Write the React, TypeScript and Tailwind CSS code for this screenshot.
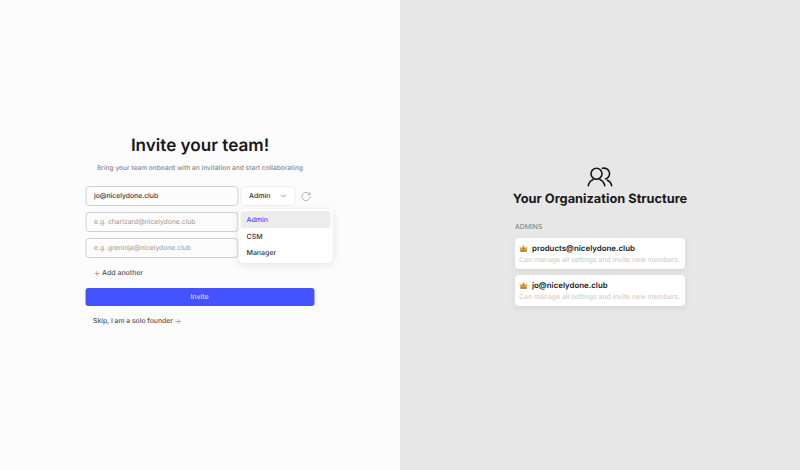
import { ChevronDown, Plus, RotateCw, ArrowRight } from "lucide-react";

const admins = ["products@nicelydone.club", "jo@nicelydone.club"];

function Crown() {
    return (
        <svg width="9" height="8" viewBox="0 0 10 9" className="shrink-0">
            <path d="M0.5 2.5 L2.6 4.4 L5 1 L7.4 4.4 L9.5 2.5 L8.7 7 H1.3 Z" fill="#dba83a" />
            <rect x="1.3" y="7" width="7.4" height="1.6" rx="0.4" fill="#8a6a2a" />
            <circle cx="5" cy="5" r="0.8" fill="#b5472f" />
        </svg>
    );
}

function TeamIcon() {
    return (
        <svg width="26" height="20" viewBox="0 0 26 20" fill="none" stroke="#18181b" strokeWidth="1.6" strokeLinecap="round">
            <circle cx="9.5" cy="6.7" r="5.5" />
            <path d="M1.3 18.6c.6-3.2 2.4-5 4.6-5.9" />
            <path d="M13.1 12.7c2.2.9 4 2.7 4.6 5.9" />
            <path d="M15.5 1.3a5.5 5.5 0 0 1 3 10.6" />
            <path d="M20.4 13.2c2.1.9 3.7 2.6 4.3 5.4" />
        </svg>
    );
}

export default function App() {
    return (
        <div className="flex h-[470px] w-[800px] overflow-hidden font-['Inter',sans-serif] [text-rendering:geometricPrecision]">
            <div className="flex w-[400px] flex-col items-center bg-[#fcfcfc] pt-[133px]">
                <h1 className="text-[17.1px] leading-[26px] font-semibold text-[#18181b]">Invite your team!</h1>
                <p className="mt-[3px] text-[6.6px] leading-[12px] font-medium text-[#8a8a8a]">
                    Bring your team onboard with an invitation and start collaborating
                </p>

                <div className="mt-[12px] w-[229px] -translate-x-[0.5px]">
                    <div className="flex h-[20px] items-center gap-[2px]">
                        <div className="flex h-[20px] w-[153px] items-center rounded-[4px] border-[1.5px] border-[#d0d0d0] px-[8px] text-[6.8px] font-medium text-[#333]">
                            jo@nicelydone.club
                        </div>
                        <div className="flex h-[20px] w-[55px] items-center justify-between rounded-[4px] border border-[#eeeeee] bg-white pr-[7px] pl-[8px] text-[7px] font-medium text-[#333]">
                            Admin
                            <ChevronDown size={8} color="#666" />
                        </div>
                        <RotateCw size={11} color="#9a9a9a" strokeWidth={1.5} className="ml-[3px]" />
                    </div>

                    <div className="relative mt-[6px] flex flex-col gap-[6px]">
                        <div className="flex h-[20px] w-[153px] items-center rounded-[4px] border-[1.5px] border-[#d0d0d0] px-[8px] text-[6.8px] text-[#9a9a9a]">
                            e.g. charizard@nicelydone.club
                        </div>
                        <div className="flex h-[20px] w-[153px] items-center rounded-[4px] border-[1.5px] border-[#d0d0d0] px-[8px] text-[6.8px] text-[#9a9a9a]">
                            e.g. greninja@nicelydone.club
                        </div>
                        <div className="absolute top-[-3px] left-[153.5px] flex w-[94px] flex-col rounded-[5px] bg-white p-[2px] text-[7px] font-medium text-[#333] shadow-[0_2px_8px_rgba(0,0,0,0.10)]">
                            <div className="flex h-[17px] items-center rounded-[3px] bg-[#ececec] px-[6px] pt-[1px] text-[#4353ff]">Admin</div>
                            <div className="flex h-[17px] items-center px-[6px] pt-[1px]">CSM</div>
                            <div className="flex h-[16px] items-center px-[6px]">Manager</div>
                        </div>
                    </div>

                    <div className="mt-[8px] flex h-[14px] items-center gap-[2px] pl-[8px] text-[7px] font-medium text-[#555]">
                        <Plus size={7} color="#777" />
                        Add another
                    </div>

                    <div className="mt-[8px] flex h-[18px] items-center justify-center rounded-[3px] bg-[#4353ff] text-[7px] font-medium text-[#d8dcff]">
                        Invite
                    </div>

                    <div className="mt-[8px] flex h-[14px] items-center gap-[2px] pl-[8px] text-[6.8px] font-medium text-[#555]">
                        Skip, I am a solo founder
                        <ArrowRight size={7} color="#777" />
                    </div>
                </div>
            </div>

            <div className="flex w-[400px] flex-col items-center bg-[#e7e7e7] pt-[167px]">
                <TeamIcon />
                <h2 className="mt-[3px] text-[12.8px] leading-[20px] font-bold text-[#18181b]">Your Organization Structure</h2>
                <div className="mt-[11px] w-[170px]">
                    <div className="text-[6.8px] leading-[12px] font-medium text-[#8c8c8c]">ADMINS</div>
                    <div className="mt-[5px] flex flex-col gap-[6px]">
                        {admins.map((email) => (
                            <div key={email} className="h-[31px] rounded-[4px] bg-white px-[4px] pt-[3px] shadow-[0_2px_6px_rgba(0,0,0,0.08)]">
                                <div className="flex items-center gap-[4px] text-[7.9px] leading-[14px] font-semibold text-[#222]">
                                    <Crown />
                                    {email}
                                </div>
                                <div className="text-[6.9px] leading-[10px] whitespace-nowrap text-[#c8c8c8]">Can manage all settings and invite new members.</div>
                            </div>
                        ))}
                    </div>
                </div>
            </div>
        </div>
    );
}
